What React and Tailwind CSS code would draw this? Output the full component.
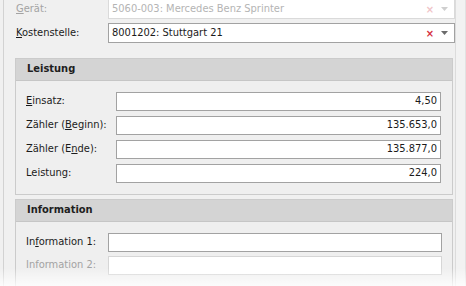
import React from "react";

const font = { fontFamily: "Tahoma, 'DejaVu Sans Condensed', 'DejaVu Sans', sans-serif" };

const Label = ({ children, disabled, className = "" }) => (
  <span className={`text-[11px] ${disabled ? "text-[#a3a3a3]" : "text-[#1b1b1b]"} ${className}`}>{children}</span>
);

const Combo = ({ value, disabled }) => (
  <div
    className={`flex items-center h-[20px] flex-1 bg-white border ${
      disabled ? "border-[#dadada]" : "border-[#a2a2a2]"
    }`}
  >
    <span className={`flex-1 pl-[3px] text-[11px] ${disabled ? "text-[#b4b4b4]" : "text-[#1b1b1b]"}`}>{value}</span>
    <span className={`text-[11px] font-bold leading-none ${disabled ? "text-[#f0c4c8]" : "text-[#d42c3c]"}`}>×</span>
    <svg width="7" height="4" viewBox="0 0 7 4" className="ml-[7px] mr-[6px]">
      <path d="M0 0h7L3.5 4z" fill={disabled ? "#cfcfcf" : "#6b6b6b"} />
    </svg>
  </div>
);

const Field = ({ value, disabled }) => (
  <div
    className={`h-[19px] flex-1 bg-white border flex items-center justify-end pr-[3px] text-[11px] text-[#1b1b1b] ${
      disabled ? "border-[#d6d6d6]" : "border-[#a2a2a2]"
    }`}
  >
    {value}
  </div>
);

const Panel = ({ title, children }) => (
  <div className="border border-[#cbcbcb] bg-[#efefef]">
    <div className="h-[22px] bg-[#d4d4d4] border-b border-[#c6c6c6] flex items-center pl-[11px] text-[11px] font-bold text-[#1e1e1e]">
      {title}
    </div>
    {children}
  </div>
);

export default function App() {
  return (
    <div className="relative w-[466px] h-[286px] overflow-hidden bg-[#f0f0f0] flex" style={font}>
      <div className="w-[3px]" />
      <div className="flex-1 border-l border-[#d2d2d2] flex flex-col">
        <div className="pl-[12px] flex flex-col gap-[4px] mt-[-1px]">
          <div className="flex items-center">
            <Label disabled className="w-[92px]">
              <u>G</u>erät:
            </Label>
            <Combo value="5060-003: Mercedes Benz Sprinter" disabled />
          </div>
          <div className="flex items-center">
            <Label className="w-[92px]">
              <u>K</u>ostenstelle:
            </Label>
            <Combo value="8001202: Stuttgart 21" />
          </div>
        </div>

        <div className="ml-[11px] mr-[2px] mt-[15px] flex flex-col gap-[4px]">
          <Panel title="Leistung">
            <div className="pl-[10px] pr-[11px] pt-[11px] pb-[11px] flex flex-col gap-[5px]">
              {[
                [<><u>E</u>insatz:</>, "4,50"],
                [<>Zähler (<u>B</u>eginn):</>, "135.653,0"],
                [<>Zähler (E<u>n</u>de):</>, "135.877,0"],
                [<>Leistung:</>, "224,0"],
              ].map(([l, v], i) => (
                <div key={i} className="flex items-center">
                  <Label className="w-[90px]">{l}</Label>
                  <Field value={v} />
                </div>
              ))}
            </div>
          </Panel>
          <Panel title="Information">
            <div className="pl-[10px] pr-[10px] pt-[11px] flex flex-col gap-[4px] h-[80px]">
              <div className="flex items-center">
                <Label className="w-[82px]">
                  In<u>f</u>ormation 1:
                </Label>
                <Field value="" />
              </div>
              <div className="flex items-center">
                <Label disabled className="w-[82px]">
                  Information 2:
                </Label>
                <Field value="" disabled />
              </div>
            </div>
          </Panel>
        </div>
      </div>
      <div className="w-[11px] border-l border-[#dcdcdc] bg-[#f2f2f2] flex justify-end">
        <div className="w-[1px] bg-[#e2e2e2]" />
      </div>
      <div className="absolute left-0 right-0 bottom-0 h-[18px] bg-gradient-to-b from-transparent to-white/80 pointer-events-none" />
    </div>
  );
}
